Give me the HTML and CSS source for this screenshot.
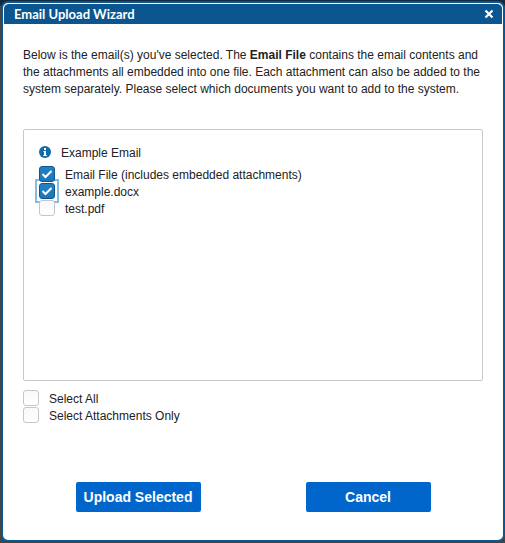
FILE: index.html
```html
<!DOCTYPE html>
<html lang="en">
<head>
<meta charset="utf-8">
<title>Email Upload Wizard</title>
<link rel="stylesheet" href="styles.css">
</head>
<body>
<main class="dialog" role="dialog" aria-labelledby="title">
  <header class="titlebar">
    <h1 id="title">Email Upload Wizard</h1>
    <button class="close" type="button" aria-label="Close">
      <svg width="10" height="10" viewBox="0 0 10 10"><path d="M1.5 1.5l7 7M8.5 1.5l-7 7" stroke="#fff" stroke-width="2.2"/></svg>
    </button>
  </header>
  <form class="content">
    <p class="intro">Below is the email(s) you've selected. The <b>Email File</b> contains the email contents and the attachments all embedded into one file. Each attachment can also be added to the system separately. Please select which documents you want to add to the system.</p>
    <section class="files">
      <h2 class="email">
        <svg width="12" height="12" viewBox="0 0 12 12"><circle cx="6" cy="6" r="6" fill="#126ba6"/><path d="M5 2h2v2H5zM4.5 5H7v4h.8v1H4.3V9H5V6h-.5z" fill="#fff"/></svg>
        Example Email
      </h2>
      <label class="option"><span class="box"><input type="checkbox" checked></span><span>Email File (includes embedded attachments)</span></label>
      <label class="option"><span class="box focused"><input type="checkbox" checked></span><span>example.docx</span></label>
      <label class="option"><span class="box"><input type="checkbox"></span><span>test.pdf</span></label>
    </section>
    <div class="bulk">
      <label class="option"><span class="box"><input type="checkbox"></span><span>Select All</span></label>
      <label class="option"><span class="box"><input type="checkbox"></span><span>Select Attachments Only</span></label>
    </div>
    <div class="actions">
      <button class="action" type="button">Upload Selected</button>
      <button class="action" type="button">Cancel</button>
    </div>
  </form>
</main>
</body>
</html>
```
FILE: styles.css
```css
* { box-sizing: border-box; }
body {
  margin: 0;
  min-height: 100vh;
  display: flex;
  padding: 1px 0 1px 1px;
  background: linear-gradient(#13293d 0, #13293d 5px, #444 6px);
  font: 12px/17px "Liberation Sans", Arial, sans-serif;
  color: #222;
}
.dialog {
  flex: 1;
  display: flex;
  flex-direction: column;
  border: 2px solid #0b568f;
  border-radius: 7px;
  background: #fff;
  overflow: hidden;
}
.titlebar {
  display: flex;
  align-items: center;
  justify-content: space-between;
  height: 21px;
  margin: 0 1px;
  padding: 0 8px 0 10px;
  border-top: 1px solid #fff;
  border-radius: 5px 5px 0 0;
  background: #0b568f;
  color: #fff;
}
.titlebar h1 {
  margin: 0;
  font: bold 13px/20px Lato, sans-serif;
}
.close {
  display: flex;
  padding: 0;
  border: 0;
  background: none;
}
.content {
  flex: 1;
  display: flex;
  flex-direction: column;
  padding: 23px 20px 28px;
}
.intro { margin: 0 0 31px; }
.files {
  height: 252px;
  padding: 15px;
  border: 1px solid #c8c8c8;
  border-radius: 2px;
}
.email {
  display: flex;
  align-items: center;
  gap: 10px;
  margin: 0 0 4px;
  font-size: 12px;
  font-weight: normal;
}
.email svg { margin-bottom: 4px; }
.option {
  display: flex;
  align-items: flex-start;
  gap: 10px;
  height: 17px;
  line-height: 19px;
}
.box {
  display: flex;
  width: 16px;
  height: 16px;
}
.focused {
  outline: 2px solid #85bce0;
  outline-offset: 2px;
}
.option input {
  position: relative;
  z-index: 1;
  appearance: none;
  width: 16px;
  height: 16px;
  margin: 0;
  outline: 0;
  border: 1px solid #c6c6ca;
  border-radius: 3px;
  background: linear-gradient(#f8f9fc, #fff);
}
.option input:checked {
  border-color: #0b568f;
  background: url("data:image/svg+xml,%3Csvg xmlns='http://www.w3.org/2000/svg' viewBox='0 0 14 14'%3E%3Cpath d='M2.5 7l3 3 6-6' fill='none' stroke='white' stroke-width='2'/%3E%3C/svg%3E"), linear-gradient(#2380c2, #1a79bb);
}
.bulk { margin-top: 9px; }
.actions {
  display: flex;
  justify-content: space-around;
  margin-top: auto;
}
.action {
  width: 125px;
  height: 30px;
  padding: 0;
  border: 0;
  border-radius: 2px;
  background: #06c;
  color: #fff;
  font: bold 14px/30px "Liberation Sans", Arial, sans-serif;
}
```
